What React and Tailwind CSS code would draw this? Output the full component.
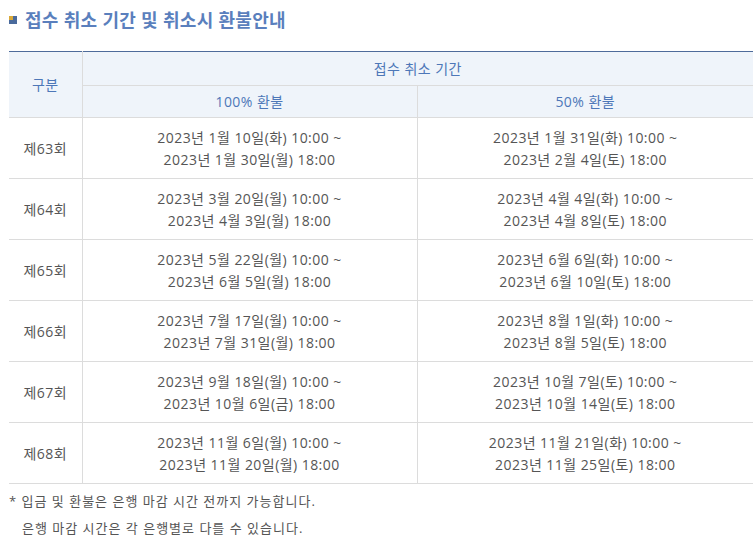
import React from "react";

const rows = [
  ["제63회", ["2023년 1월 10일(화) 10:00 ~", "2023년 1월 30일(월) 18:00"], ["2023년 1월 31일(화) 10:00 ~", "2023년 2월 4일(토) 18:00"]],
  ["제64회", ["2023년 3월 20일(월) 10:00 ~", "2023년 4월 3일(월) 18:00"], ["2023년 4월 4일(화) 10:00 ~", "2023년 4월 8일(토) 18:00"]],
  ["제65회", ["2023년 5월 22일(월) 10:00 ~", "2023년 6월 5일(월) 18:00"], ["2023년 6월 6일(화) 10:00 ~", "2023년 6월 10일(토) 18:00"]],
  ["제66회", ["2023년 7월 17일(월) 10:00 ~", "2023년 7월 31일(월) 18:00"], ["2023년 8월 1일(화) 10:00 ~", "2023년 8월 5일(토) 18:00"]],
  ["제67회", ["2023년 9월 18일(월) 10:00 ~", "2023년 10월 6일(금) 18:00"], ["2023년 10월 7일(토) 10:00 ~", "2023년 10월 14일(토) 18:00"]],
  ["제68회", ["2023년 11월 6일(월) 10:00 ~", "2023년 11월 20일(월) 18:00"], ["2023년 11월 21일(화) 10:00 ~", "2023년 11월 25일(토) 18:00"]],
];

export default function App() {
  return (
    <div className="w-[753px] h-[545px] bg-white overflow-hidden pl-[9px] pt-[7px]" style={{ fontFamily: '"Open Sans", "Noto Sans CJK KR", sans-serif' }}>
      <div className="flex items-center h-[26px]">
        <div className="relative w-[8px] h-[8px] bg-[#4a6a9c] mr-[8px]">
          <div className="absolute left-0 top-0 w-[4px] h-[4px] bg-[#d9a93a]" />
        </div>
        <span className="text-[18px] font-bold text-[#5a7fbd] leading-none tracking-[0.3px]">접수 취소 기간 및 취소시 환불안내</span>
      </div>
      <table className="mt-[18px] w-[744px] border-collapse table-fixed text-[14px] text-[#555] tracking-[0.45px]">
        <colgroup>
          <col className="w-[73px]" />
          <col className="w-[335px]" />
          <col className="w-[336px]" />
        </colgroup>
        <thead>
          <tr className="bg-[#eff4fa] border-t border-[#4e6b9a]">
            <th rowSpan={2} className="font-normal text-[#4d77b8] border-r border-[#dcdcdc] border-b h-[66px]">구분</th>
            <th colSpan={2} className="font-normal text-[#4d77b8] border-b border-[#dcdcdc] h-[33px]">접수 취소 기간</th>
          </tr>
          <tr className="bg-[#eff4fa]">
            <th className="font-normal text-[#4d77b8] border-r border-b border-[#dcdcdc] h-[32px]">100% 환불</th>
            <th className="font-normal text-[#4d77b8] border-b border-[#dcdcdc] h-[32px]">50% 환불</th>
          </tr>
        </thead>
        <tbody>
          {rows.map((r) => (
            <tr key={r[0]} className="border-b border-[#dcdcdc]">
              <td className="h-[61px] text-center border-r border-[#dcdcdc] pt-[1px]">{r[0]}</td>
              <td className="text-center border-r border-[#dcdcdc] leading-[22px] pt-[1px]">
                <div>{r[1][0]}</div>
                <div>{r[1][1]}</div>
              </td>
              <td className="text-center leading-[22px] pt-[1px]">
                <div>{r[2][0]}</div>
                <div>{r[2][1]}</div>
              </td>
            </tr>
          ))}
        </tbody>
      </table>
      <div className="mt-[4px] text-[13px] text-[#555] leading-[27px] tracking-[1px]">
        <div>* 입금 및 환불은 은행 마감 시간 전까지 가능합니다.</div>
        <div className="pl-[13px]">은행 마감 시간은 각 은행별로 다를 수 있습니다.</div>
      </div>
    </div>
  );
}
